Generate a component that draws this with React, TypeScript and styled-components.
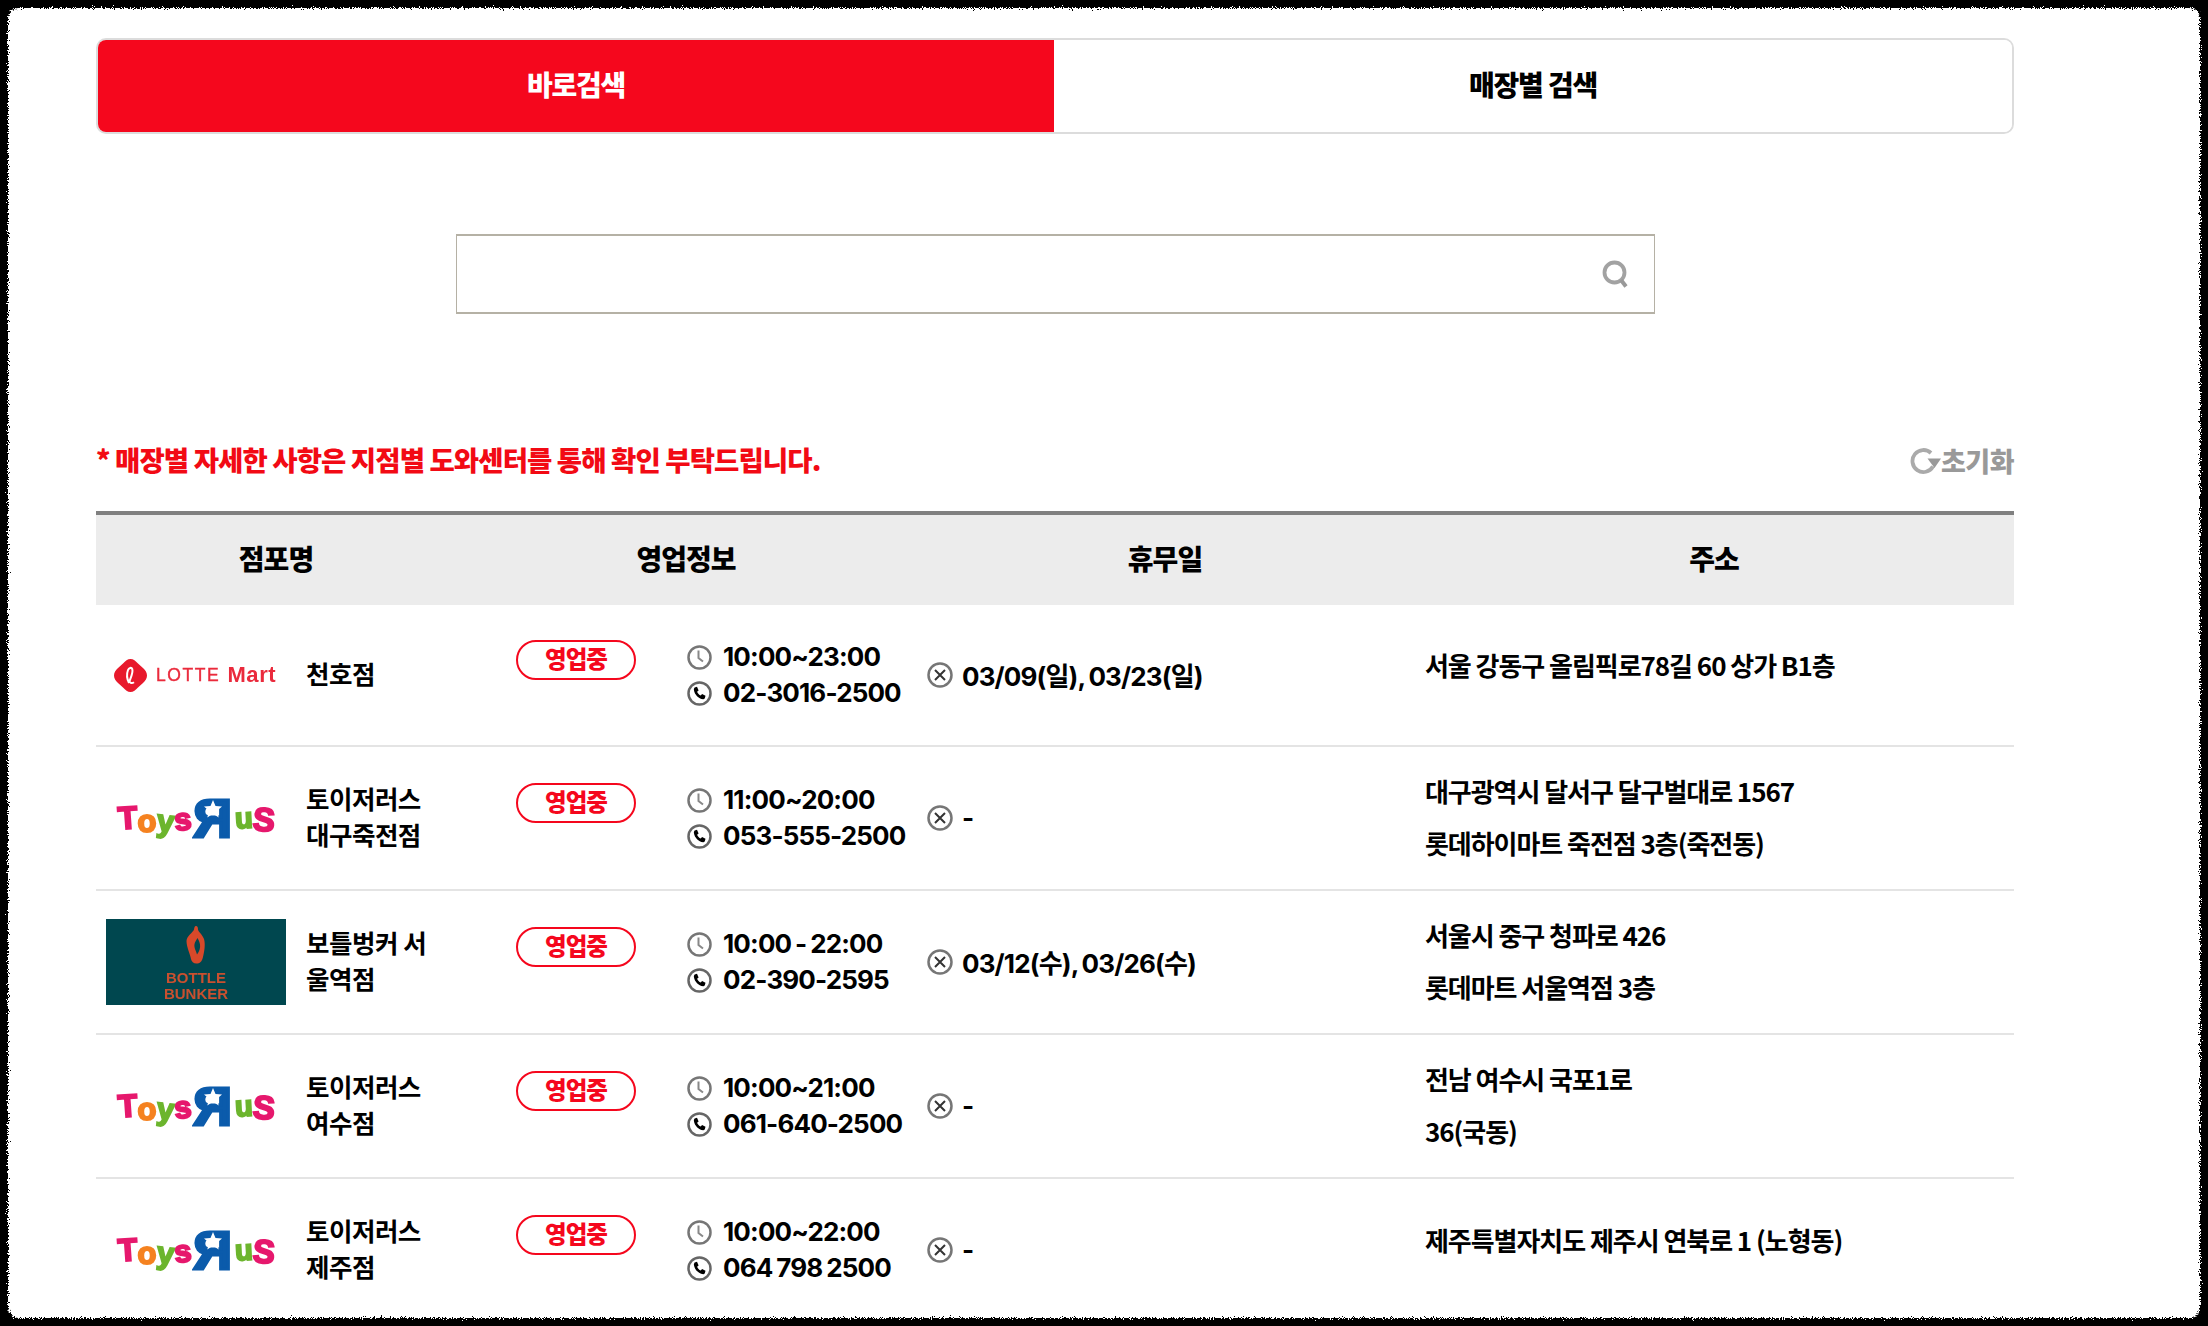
import React from "react";
import styled, { createGlobalStyle } from "styled-components";

const Global = createGlobalStyle`
  html, body { margin: 0; padding: 0; background: #fff; }
  body { font-family: "Noto Sans CJK KR", "Noto Sans", sans-serif; color: #000; overflow: hidden; }
`;

const RED = "#f5071d";

const Page = styled.div`
  position: relative;
  width: 2208px;
  height: 1326px;
  overflow: hidden;
  background: #fff;
  padding: 38px 0 0 96px;
  box-sizing: border-box;
`;
const Rim = styled.div`
  position: absolute;
  inset: -12px;
  border: 20px solid #000;
  border-radius: 30px;
  filter: url(#rough);
  pointer-events: none;
`;
const HiddenSvg = styled.svg`
  position: absolute;
  width: 0;
  height: 0;
`;
const Content = styled.div`
  width: 1918px;
`;
const Tabs = styled.div`
  display: grid;
  grid-template-columns: 956px 1fr;
  height: 96px;
  border: 2px solid #dcdcdc;
  border-radius: 10px;
  box-sizing: border-box;
  overflow: hidden;
`;
const Tab = styled.div<{ $active?: boolean }>`
  display: flex;
  align-items: center;
  justify-content: center;
  padding-bottom: 5px;
  background: ${(p) => (p.$active ? RED : "#fff")};
  color: ${(p) => (p.$active ? "#fff" : "#000")};
  font-size: 28px;
  font-weight: 900;
  letter-spacing: -1.2px;
`;
const SearchBox = styled.div`
  display: flex;
  align-items: center;
  justify-content: flex-end;
  width: 1199px;
  height: 80px;
  margin: 100px auto 0;
  padding-right: 24px;
  border: 2px solid #b5b1a5;
  border-left-width: 1.5px;
  border-right-width: 1.5px;
  box-sizing: border-box;
`;
const NoteRow = styled.div`
  display: flex;
  align-items: center;
  justify-content: space-between;
  height: 60px;
  margin-top: 117px;
  margin-bottom: 20px;
`;
const Note = styled.div`
  color: #f20a14;
  font-size: 27.5px;
  font-weight: 900;
  letter-spacing: -0.9px;
  margin-bottom: 4px;
`;
const Reset = styled.div`
  display: flex;
  align-items: center;
  gap: 0;
  color: #999;
  font-size: 27px;
  font-weight: 900;
  letter-spacing: -0.5px;
`;
const ResetLabel = styled.span`
  margin-bottom: 2px;
`;
const Table = styled.div`
  border-top: 4px solid #808080;
`;
const HeadRow = styled.div`
  display: grid;
  grid-template-columns: 360px 460px 498px 600px;
  height: 90px;
  background: #ececec;
`;
const HeadCell = styled.div`
  display: flex;
  align-items: center;
  justify-content: center;
  padding-bottom: 4px;
  font-size: 28px;
  font-weight: 900;
  letter-spacing: -1px;
`;
const Body = styled.div``;
const Row = styled.div`
  display: grid;
  grid-template-columns: 360px 460px 498px 600px;
  align-items: center;
  height: 144px;
  border-bottom: 2px solid #e4e4e4;
  box-sizing: border-box;
  font-size: 26px;
  font-weight: 700;
  letter-spacing: -0.9px;
  &:first-of-type { height: 142px; }
`;
const StoreCell = styled.div`
  display: flex;
  align-items: center;
  padding-left: 10px;
`;
const LogoSlot = styled.div`
  display: flex;
  align-items: center;
  justify-content: center;
  width: 180px;
  height: 86px;
  flex: none;
`;
const Name = styled.div`
  margin-left: 20px;
  margin-bottom: 4px;
  width: 125px;
  line-height: 36px;
  word-break: break-all;
  font-size: 25.5px;
  letter-spacing: -0.5px;
`;
const InfoCell = styled.div`
  display: flex;
  align-items: center;
  padding-left: 60px;
`;
const Badge = styled.div`
  display: flex;
  align-items: center;
  justify-content: center;
  flex: none;
  width: 120px;
  height: 40px;
  margin-bottom: 30px;
  padding-bottom: 5px;
  border: 2px solid ${RED};
  border-radius: 20px;
  box-sizing: border-box;
  color: ${RED};
  font-size: 23.5px;
  font-weight: 900;
  letter-spacing: -0.9px;
`;
const Hours = styled.div`
  margin-left: 51px;
`;
const IconLine = styled.div`
  display: flex;
  align-items: center;
  gap: 11px;
  height: 36px;
  white-space: nowrap;
`;
const NumberText = styled.span`
  font-family: Inter, "Noto Sans CJK KR", sans-serif;
  font-weight: 700;
  font-size: 26px;
  letter-spacing: -0.85px;
  word-spacing: -1.5px;
  margin-bottom: 1px;
`;
const ClosedCell = styled.div`
  display: flex;
  align-items: center;
  gap: 9px;
  padding-left: 11px;
`;
const AddressCell = styled.div<{ $single?: boolean }>`
  padding-left: 11px;
  line-height: 52px;
  margin-bottom: ${(p) => (p.$single ? "20px" : "2px")};
  letter-spacing: -1.05px;
`;

/* logos */
const LotteLogo = styled.div`
  display: flex;
  align-items: center;
  width: 164px;
  color: #ea2a3c;
  filter: blur(0.6px);
  white-space: nowrap;
  font-family: "Liberation Sans", sans-serif;
`;
const LotteWord = styled.span`
  margin-left: 9px;
  font-size: 17.5px;
  letter-spacing: 1.6px;
  font-weight: 400;
  -webkit-text-stroke: 0.4px currentColor;
`;
const MartWord = styled.span`
  margin-left: 7px;
  font-size: 22px;
  letter-spacing: 0.6px;
  font-weight: 700;
`;
const ToysLogo = styled.div`
  display: flex;
  align-items: center;
  justify-content: center;
  width: 162px;
  height: 44px;
  filter: blur(0.6px);
  font-family: "Liberation Sans", sans-serif;
  font-weight: 700;
  -webkit-text-stroke: 2px currentColor;
`;
const ToyLetter = styled.span<{ $color: string; $rot: number; $size: number; $drop?: number }>`
  display: inline-block;
  margin: 0 0.5px;
  color: ${(p) => p.$color};
  font-size: ${(p) => p.$size}px;
  line-height: 1;
  transform: translateY(${(p) => p.$drop ?? 0}px) rotate(${(p) => p.$rot}deg);
`;
const BigR = styled.span`
  position: relative;
  display: inline-block;
  width: 40px;
  height: 44px;
  margin: 0 2px;
  color: #0b5bab;
`;
const BigRGlyph = styled.span`
  display: block;
  font-size: 54px;
  line-height: 44px;
  text-align: center;
  transform: scaleX(-1);
  -webkit-text-stroke: 3px currentColor;
`;
const RStar = styled.svg`
  position: absolute;
  left: 10px;
  top: 3px;
`;
const BottleLogo = styled.div`
  display: flex;
  flex-direction: column;
  align-items: center;
  width: 180px;
  height: 86px;
  padding-top: 7px;
  box-sizing: border-box;
  background: #00474f;
  color: #c9502f;
`;
const BottleText = styled.div`
  margin-top: 6px;
  font-family: "Liberation Sans", sans-serif;
  font-size: 15px;
  line-height: 15.500px;
  font-weight: 700;
  text-align: center;
  letter-spacing: 0;
  filter: blur(0.6px);
`;

/* icons */
const ClockIcon = () => (
  <svg width="25" height="25" viewBox="0 0 25 25" fill="none">
    <circle cx="12.5" cy="12.5" r="11" stroke="#767676" strokeWidth="2.500" />
    <path d="M11.5 5.5v7.5l4.5 3.5" stroke="#888" strokeWidth="2" />
  </svg>
);
const PhoneIcon = () => (
  <svg width="25" height="25" viewBox="0 0 25 25" fill="none">
    <circle cx="12.5" cy="12.5" r="11" stroke="#666" strokeWidth="2.500" />
    <path
      d="M7.600 6.400l2.400-.6 1.600 3.600-1.500 1.300c.7 1.800 2 3.100 3.600 3.800l1.400-1.500 3.400 1.700-.6 2.400c-.2.8-.9 1.200-1.700 1.100-4.800-.7-8.500-4.500-9.300-9.300-.1-.8.100-1.400.7-2.500z"
      fill="#000"
    />
  </svg>
);
const ClosedIcon = () => (
  <svg width="26" height="26" viewBox="0 0 26 26" fill="none">
    <circle cx="13" cy="13" r="11.500" stroke="#767676" strokeWidth="2.500" />
    <path d="M8 8l10 10M18 8L8 18" stroke="#333" strokeWidth="2" />
  </svg>
);
const SearchIcon = () => (
  <svg width="28" height="28" viewBox="0 0 28 28" fill="none">
    <circle cx="12.500" cy="12.500" r="10" stroke="#a2a2a2" strokeWidth="3.800" />
    <path d="M19 20l5 6.500" stroke="#999" strokeWidth="4" />
  </svg>
);
const ResetIcon = () => (
  <svg width="31" height="30" viewBox="0 0 31 30" fill="none">
    <path d="M23 20.500A11 11 0 1 1 21 7" stroke="#aaa" strokeWidth="3.800" />
    <path d="M17.500 12.500H31L24.500 22z" fill="#999" />
  </svg>
);

const Lotte = () => (
  <LotteLogo>
    <svg width="33" height="33" viewBox="0 0 33 33">
      <path d="M16.500 0c3 0 5 2 7.500 4.500L29 9c2.500 2.500 4 4.500 4 7.500s-1.500 5-4 7.500l-5 4.500C21.500 31 19.500 33 16.500 33s-5-2-7.500-4.500L4 24C1.500 21.500 0 19.500 0 16.500S1.500 11.500 4 9l5-4.500C11.500 2 13.500 0 16.500 0z" fill="#e8192c" />
      <path d="M15 24c-2-4-2.500-9-1-13 .8-2.200 3.500-3 4.300-.8 1 3-1.300 8-2.800 12 .3 2 2.500 2.500 4.500 1" fill="none" stroke="#fff" strokeWidth="2" />
    </svg>
    <LotteWord>LOTTE</LotteWord>
    <MartWord>Mart</MartWord>
  </LotteLogo>
);

const Toys = () => (
  <ToysLogo>
    <ToyLetter $color="#e6186d" $rot={-4} $size={32}>T</ToyLetter>
    <ToyLetter $color="#f58220" $rot={0} $size={31} $drop={3}>o</ToyLetter>
    <ToyLetter $color="#6cb52d" $rot={6} $size={31} $drop={3}>y</ToyLetter>
    <ToyLetter $color="#e6186d" $rot={-6} $size={31} $drop={1}>s</ToyLetter>
    <BigR>
      <BigRGlyph>R</BigRGlyph>
      <RStar width="20" height="20" viewBox="0 0 20 20">
        <polygon points="10,1 12.500,7 19,7.500 14,11.700 15.700,18.500 10,14.800 4.300,18.500 6,11.700 1,7.500 7.500,7" fill="#fff" />
      </RStar>
    </BigR>
    <ToyLetter $color="#6cb52d" $rot={-3} $size={29}>u</ToyLetter>
    <ToyLetter $color="#e6186d" $rot={5} $size={33} $drop={1}>S</ToyLetter>
  </ToysLogo>
);

const Bottle = () => (
  <BottleLogo>
    <svg width="22" height="38" viewBox="0 0 22 38">
      <path
        fillRule="evenodd"
        d="M11 0c1.500 0 2 1.500 2 3.500 0 2 4.500 5 6 9.500 1.500 5 .5 12-1 18-.7 3-2 6-5.500 6.500C9 38 6.500 36 6 33c-.8-5-4.500-12-4.500-18 0-5 6.500-8.500 7.500-11.500C9.300 2 9.500 0 11 0zM12.500 12c-1.500 2.500-3.500 5-3 9 .4 2.500 2 5 2.500 7.500 2.500-3 3.500-7 3-10-.3-2.500-1.500-4.500-2.500-6.500z"
        fill="#d8492a"
      />
    </svg>
    <BottleText>
      BOTTLE
      <br />
      BUNKER
    </BottleText>
  </BottleLogo>
);

type Store = {
  logo: React.ReactNode;
  name: string;
  time: string;
  phone: string;
  closed: string;
  address: string[];
};

const stores: Store[] = [
  { logo: <Lotte />, name: "천호점", time: "10:00~23:00", phone: "02-3016-2500", closed: "03/09(일), 03/23(일)", address: ["서울 강동구 올림픽로78길 60 상가 B1층"] },
  { logo: <Toys />, name: "토이저러스 대구죽전점", time: "11:00~20:00", phone: "053-555-2500", closed: "-", address: ["대구광역시 달서구 달구벌대로 1567", "롯데하이마트 죽전점 3층(죽전동)"] },
  { logo: <Bottle />, name: "보틀벙커 서울역점", time: "10:00 - 22:00", phone: "02-390-2595", closed: "03/12(수), 03/26(수)", address: ["서울시 중구 청파로 426", "롯데마트 서울역점 3층"] },
  { logo: <Toys />, name: "토이저러스 여수점", time: "10:00~21:00", phone: "061-640-2500", closed: "-", address: ["전남 여수시 국포1로", "36(국동)"] },
  { logo: <Toys />, name: "토이저러스 제주점", time: "10:00~22:00", phone: "064 798 2500", closed: "-", address: ["제주특별자치도 제주시 연북로 1 (노형동)"] },
];

export default function App() {
  return (
    <Page>
      <Global />
      <HiddenSvg aria-hidden="true">
        <filter id="rough" x="-2%" y="-2%" width="104%" height="104%">
          <feTurbulence type="fractalNoise" baseFrequency="0.9" numOctaves="2" seed="4" />
          <feDisplacementMap in="SourceGraphic" scale="8" xChannelSelector="R" yChannelSelector="G" />
          <feGaussianBlur stdDeviation="0.5" />
        </filter>
      </HiddenSvg>
      <Content>
        <Tabs>
          <Tab $active>바로검색</Tab>
          <Tab>매장별 검색</Tab>
        </Tabs>
        <SearchBox>
          <SearchIcon />
        </SearchBox>
        <NoteRow>
          <Note>* 매장별 자세한 사항은 지점별 도와센터를 통해 확인 부탁드립니다.</Note>
          <Reset>
            <ResetIcon />
            <ResetLabel>초기화</ResetLabel>
          </Reset>
        </NoteRow>
        <Table>
          <HeadRow>
            <HeadCell>점포명</HeadCell>
            <HeadCell>영업정보</HeadCell>
            <HeadCell>휴무일</HeadCell>
            <HeadCell>주소</HeadCell>
          </HeadRow>
          <Body>
            {stores.map((s) => (
              <Row key={s.name}>
                <StoreCell>
                  <LogoSlot>{s.logo}</LogoSlot>
                  <Name>{s.name}</Name>
                </StoreCell>
                <InfoCell>
                  <Badge>영업중</Badge>
                  <Hours>
                    <IconLine>
                      <ClockIcon />
                      <NumberText>{s.time}</NumberText>
                    </IconLine>
                    <IconLine>
                      <PhoneIcon />
                      <NumberText>{s.phone}</NumberText>
                    </IconLine>
                  </Hours>
                </InfoCell>
                <ClosedCell>
                  <ClosedIcon />
                  <NumberText>{s.closed}</NumberText>
                </ClosedCell>
                <AddressCell $single={s.address.length === 1}>
                  {s.address.map((a) => (
                    <div key={a}>{a}</div>
                  ))}
                </AddressCell>
              </Row>
            ))}
          </Body>
        </Table>
      </Content>
      <Rim />
    </Page>
  );
}
